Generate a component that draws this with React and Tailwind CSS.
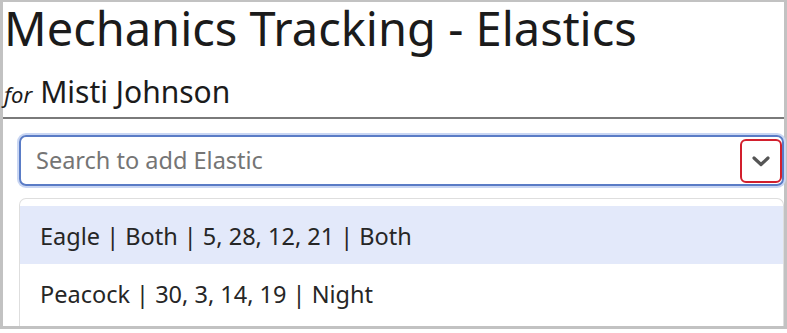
import React from "react";

export default function App() {
  const options = [
    { label: "Eagle | Both | 5, 28, 12, 21 | Both", active: true },
    { label: "Peacock | 30, 3, 14, 19 | Night", active: false },
  ];

  return (
    <div
      className="w-[787px] h-[333px] bg-white"
      style={{ fontFamily: "'Noto Sans', 'Open Sans', sans-serif" }}
    >
      {/* framed screenshot area */}
      <div className="w-[787px] h-[329px] border-t-[2px] border-l-[3px] border-r-[3px] border-b-[3px] border-[#c2c2c2] flex flex-col">
        {/* Header */}
        <div className="pl-[1px]">
          <h1 className="text-[47px] leading-[52px] text-[#1b1b1b]">
            Mechanics Tracking - Elastics
          </h1>
          <div className="flex items-baseline gap-[8px] mt-[18px]">
            <span className="italic text-[22px] text-[#1b1b1b]">for</span>
            <span className="text-[30px] leading-[40px] text-[#1b1b1b]">
              Misti Johnson
            </span>
          </div>
        </div>

        <div className="h-[2px] bg-[#7a7a7a] mt-[5px]" />

        {/* Search */}
        <div className="pl-[16px] pt-[16px]">
          <div className="h-[51px] rounded-[7px] border-[2px] border-[#5a7cc6] ring-[2px] ring-[#c9d6f3] flex items-center pl-[15px] pr-0">
            <span className="flex-1 text-[23.5px] text-[#757575]">
              Search to add Elastic
            </span>
            <div className="w-[42px] h-[44px] rounded-[6px] border-[2.5px] border-[#d21f2d] flex items-center justify-center">
              <svg
                width="20"
                height="12"
                viewBox="0 0 20 12"
                fill="none"
                stroke="#555"
                strokeWidth="3.2"
                strokeLinecap="round"
                strokeLinejoin="round"
              >
                <path d="M3 3 L10 9.5 L17 3" />
              </svg>
            </div>
          </div>
        </div>

        {/* Dropdown list */}
        <div className="pl-[16px] pt-[12px] flex-1 min-h-0 overflow-hidden">
          <div className="h-full rounded-tl-[7px] rounded-tr-[7px] border-t border-l border-r border-[#dedede] pt-[7px]">
            {options.map((o) => (
              <div
                key={o.label}
                className={
                  "h-[58px] flex items-center pl-[20px] pt-[3px] text-[23.5px] text-[#262626] " +
                  (o.active ? "bg-[#e3e9fa]" : "bg-white")
                }
              >
                {o.label}
              </div>
            ))}
          </div>
        </div>
      </div>
    </div>
  );
}
